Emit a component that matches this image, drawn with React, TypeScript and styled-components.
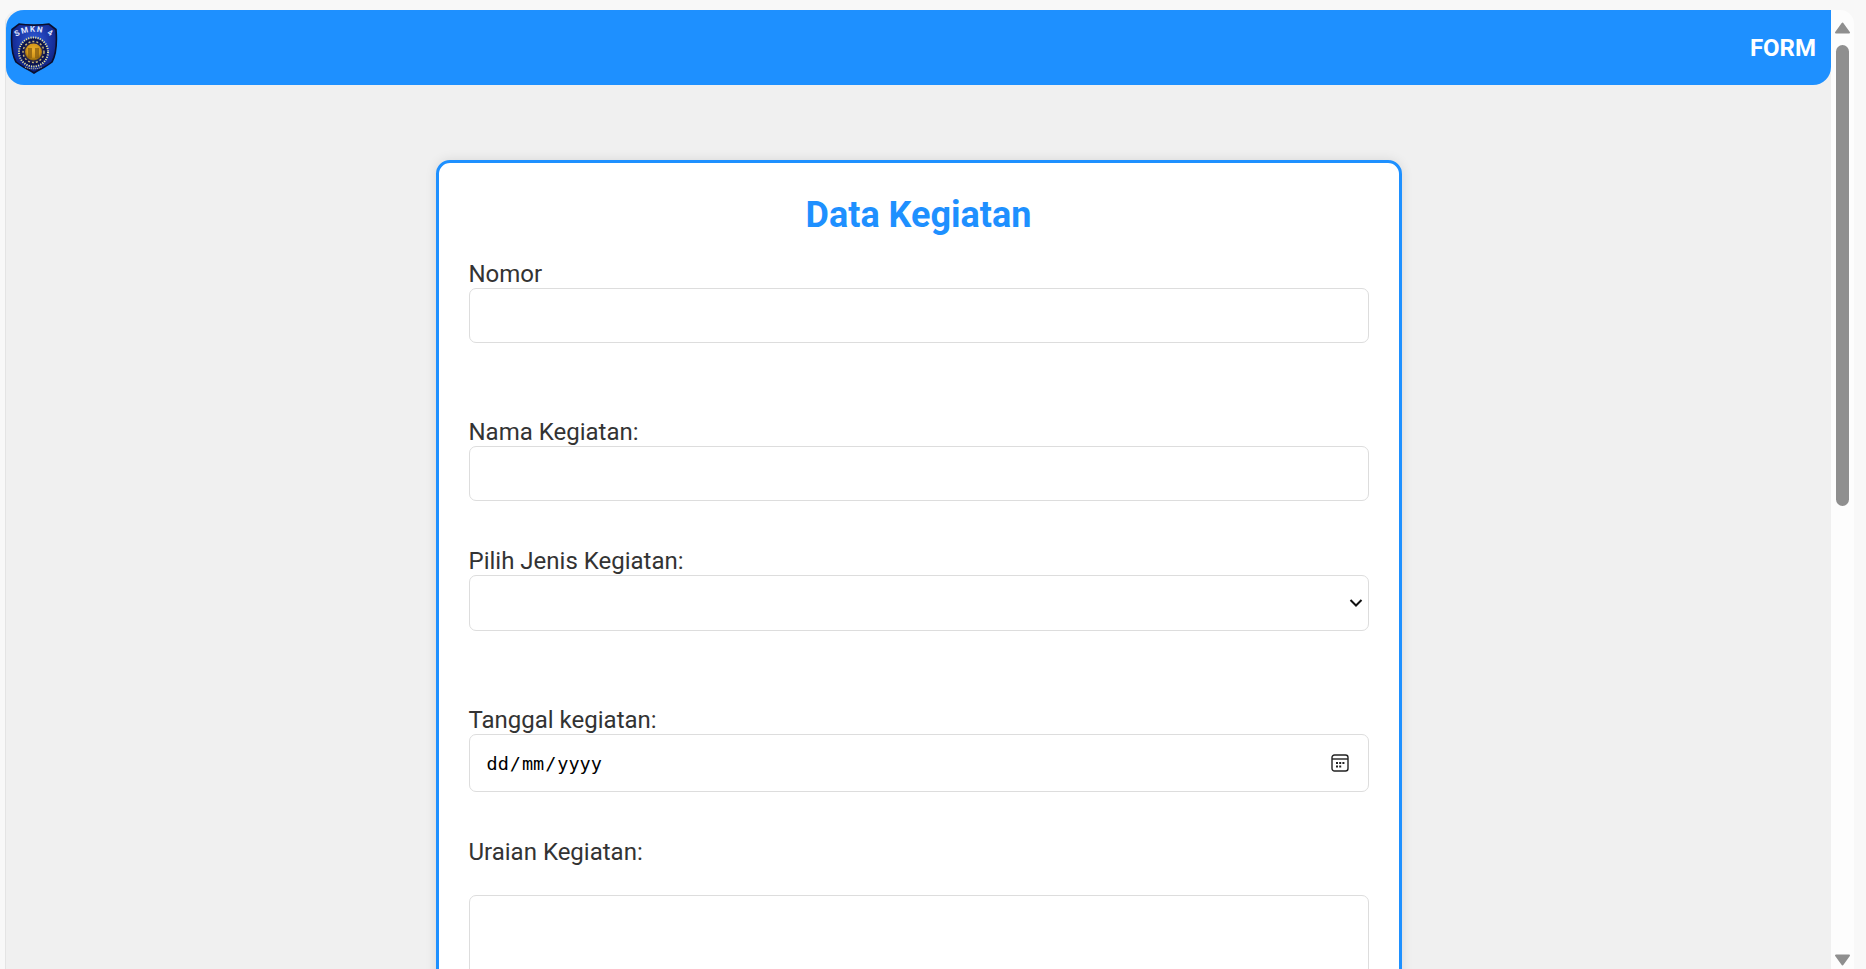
import React from 'react';
import styled, { createGlobalStyle } from 'styled-components';

const GlobalStyle = createGlobalStyle`
  html, body {
    margin: 0;
    height: 100%;
    overflow: hidden;
    background: #f8f8f8;
    font-family: Roboto, "Liberation Sans", sans-serif;
  }
`;

const Frame = styled.div`
  height: 969px;
  box-sizing: border-box;
  padding: 10px 12px 0 5px;
  display: flex;
`;

const Viewport = styled.div`
  flex: 1;
  display: flex;
  min-width: 0;
  border-top-right-radius: 14px;
  border-top-left-radius: 14px;
  overflow: hidden;
`;

const Page = styled.div`
  flex: 1;
  min-width: 0;
  background: #f0f0f0;
  border-left: 1px solid #e4e4e4;
  overflow: hidden;
`;

const Header = styled.header`
  height: 75px;
  background: #1e90ff;
  border-radius: 0 0 18px 18px;
  border-top-left-radius: 18px;
  display: flex;
  align-items: center;
  justify-content: space-between;
  padding: 0 15px 0 4px;
`;

const Brand = styled.span`
  color: #fff;
  font-size: 24px;
  font-weight: 700;
`;

const Card = styled.form`
  width: 966px;
  box-sizing: border-box;
  margin: 75px auto 0;
  background: #fff;
  border: 3px solid #1e90ff;
  border-radius: 14px;
  padding: 30px;
  box-shadow: 0 0 12px rgba(0, 0, 0, 0.1);
`;

const Title = styled.h2`
  margin: 2px 0 26px;
  color: #1e90ff;
  font-size: 36px;
  line-height: 41px;
  font-weight: 700;
  text-align: center;
`;

const Field = styled.div<{ $after: number }>`
  margin-bottom: ${p => p.$after}px;
`;

const Label = styled.label<{ $below?: number }>`
  display: block;
  color: #333;
  font-size: 24px;
  line-height: 24px;
  margin-bottom: ${p => p.$below ?? 2}px;
`;

const TextInput = styled.input`
  display: block;
  width: 100%;
  height: 55px;
  box-sizing: border-box;
  background: #fff;
  border: 1px solid #ddd;
  border-radius: 7px;
`;

const SelectWrap = styled.div`
  position: relative;
`;

const Select = styled.select`
  display: block;
  width: 100%;
  height: 56px;
  box-sizing: border-box;
  appearance: none;
  background: #fff;
  border: 1px solid #ddd;
  border-radius: 7px;
  font-size: 21px;
  padding: 0 8px;
`;

const Chevron = styled.svg`
  position: absolute;
  right: 6px;
  top: 23px;
  pointer-events: none;
`;

const DateBox = styled.div`
  height: 58px;
  box-sizing: border-box;
  border: 1px solid #ddd;
  border-radius: 7px;
  display: flex;
  align-items: center;
  justify-content: space-between;
  padding: 0 19px 0 17px;
`;

const DateText = styled.span`
  font-family: "DejaVu Sans Mono", "Liberation Mono", monospace;
  font-size: 18.5px;
  color: #000;
`;

const DateSlash = styled.span`
  margin: 0 1px;
`;

const TextArea = styled.textarea`
  display: block;
  width: 100%;
  height: 200px;
  box-sizing: border-box;
  background: #fff;
  border: 1px solid #ddd;
  border-radius: 7px;
  resize: none;
`;

const Track = styled.div`
  width: 23px;
  flex: none;
  background: #fdfdfd;
  display: flex;
  flex-direction: column;
  align-items: center;
  justify-content: space-between;
  padding: 12px 0 3px;
  box-sizing: border-box;
`;

const Thumb = styled.div`
  width: 13px;
  height: 461px;
  background: #8f8f8f;
  border-radius: 7px;
  margin-top: 11px;
`;

const TrackColumn = styled.div`
  display: flex;
  flex-direction: column;
  align-items: center;
`;

const Arrow = ({ down }: { down?: boolean }) => (
  <svg width="17" height="12" viewBox="0 0 17 12">
    <path d={down ? 'M2 1.5h13L8.5 10.5z' : 'M8.5 1.5L15 10.5H2z'} fill="#8f8f8f" stroke="#8f8f8f" strokeWidth="2" strokeLinejoin="round" />
  </svg>
);

const CalendarIcon = () => (
  <svg width="18" height="18" viewBox="0 0 18 18" fill="none">
    <rect x="1" y="1" width="16" height="16" rx="2.5" stroke="#222" strokeWidth="1.4" />
    <path d="M1 5h16" stroke="#222" strokeWidth="1.4" />
    <path d="M5 8h2v2H5zM8.2 8h2v2h-2zM11.4 8h2v2h-2zM5 11.5h2v2H5zM8.2 11.5h2v2h-2z" fill="#222" />
  </svg>
);

const Logo = () => (
  <svg width="48" height="52" viewBox="0 0 48 52">
    <defs>
      <radialGradient id="shield" cx="0.5" cy="0.35" r="0.7">
        <stop offset="0" stopColor="#2f5bd8" />
        <stop offset="0.6" stopColor="#17309e" />
        <stop offset="1" stopColor="#0a1a6a" />
      </radialGradient>
      <radialGradient id="gold" cx="0.5" cy="0.4" r="0.6">
        <stop offset="0" stopColor="#eeb02c" />
        <stop offset="0.65" stopColor="#d2961a" />
        <stop offset="1" stopColor="#7d5a0c" />
      </radialGradient>
      <path id="arc" d="M6 15C16 8 32 8 42 15" />
    </defs>
    <path
      d="M9 2C17 3.5 31 3.5 39 2L46 7.5C47 20 46.5 32 42 40C36 45 29 47.5 24 51C19 47.5 12 45 6 40C1.5 32 1 20 2 7.5Z"
      fill="url(#shield)"
      stroke="#0a0f2e"
      strokeWidth="1.6"
    />
    <text fontSize="8" fontWeight="700" fill="#dfe6ff" fontFamily="Roboto, sans-serif" letterSpacing="1.4">
      <textPath href="#arc" startOffset="50%" textAnchor="middle">SMKN 4</textPath>
    </text>
    <circle cx="23.5" cy="30" r="14" fill="#0a1450" />
    <circle cx="23.5" cy="30" r="14.5" fill="none" stroke="#e2df9a" strokeWidth="2" strokeDasharray="1.2 1.2" />
    <circle cx="23.5" cy="30" r="10.5" fill="#23224a" strokeDasharray="2 2" stroke="#c9b774" strokeWidth="1.4" />
    <circle cx="23.5" cy="30" r="8.5" fill="url(#gold)" />
    <path d="M18 36v-10h4v10zM25 36v-10h4v10z" fill="#8a5f10" opacity="0.75" />
    <path d="M15 45c5 2.4 12 2.4 17 0" stroke="#e2df9a" strokeWidth="1" fill="none" strokeDasharray="1 1" />
  </svg>
);

export default function App() {
  return (
    <>
      <GlobalStyle />
      <Frame>
        <Viewport>
          <Page>
            <Header>
              <Logo />
              <Brand>FORM</Brand>
            </Header>
            <Card>
              <Title>Data Kegiatan</Title>
              <Field $after={77}>
                <Label>Nomor</Label>
                <TextInput />
              </Field>
              <Field $after={48}>
                <Label>Nama Kegiatan:</Label>
                <TextInput />
              </Field>
              <Field $after={77}>
                <Label>Pilih Jenis Kegiatan:</Label>
                <SelectWrap>
                  <Select />
                  <Chevron width="14" height="10" viewBox="0 0 14 10" fill="none">
                    <path d="M1.5 2l5.5 5.5L12.5 2" stroke="#111" strokeWidth="2" />
                  </Chevron>
                </SelectWrap>
              </Field>
              <Field $after={48}>
                <Label>Tanggal kegiatan:</Label>
                <DateBox>
                  <DateText>dd<DateSlash>/</DateSlash>mm<DateSlash>/</DateSlash>yyyy</DateText>
                  <CalendarIcon />
                </DateBox>
              </Field>
              <Field $after={0}>
                <Label $below={31}>Uraian Kegiatan:</Label>
                <TextArea />
              </Field>
            </Card>
          </Page>
          <Track>
            <TrackColumn>
              <Arrow />
              <Thumb />
            </TrackColumn>
            <Arrow down />
          </Track>
        </Viewport>
      </Frame>
    </>
  );
}
